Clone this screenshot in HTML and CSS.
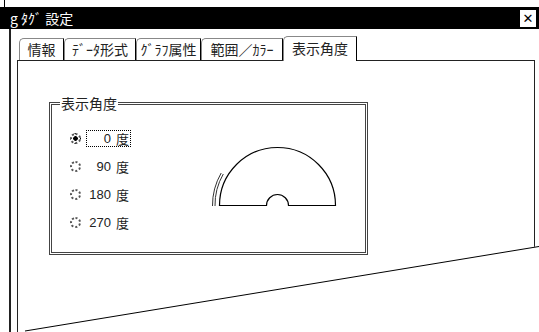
FILE: index.html
```html
<!DOCTYPE html>
<html lang="ja">
  <head>
    <meta charset="UTF-8">
    <title>g タグ 設定</title>
    <link rel="stylesheet" href="styles.css">
  </head>
  <body>
    <div class="top"><span class="tick"></span></div>
    <div class="titlebar">
      <span class="title">g ﾀｸﾞ 設定</span>
      <span class="close">✕</span>
    </div>

    <div class="window">
      <!-- tab strip -->
      <div class="tabs">
        <div class="tab t1">情報</div>
        <div class="tab t2">ﾃﾞｰﾀ形式</div>
        <div class="tab t3">ｸﾞﾗﾌ属性</div>
        <div class="tab t4">範囲／ｶﾗｰ</div>
        <div class="tab t5 active">表示角度</div>
      </div>

      <div class="panel">
        <fieldset class="group">
          <legend>表示角度</legend>
          <div class="group-body">
            <ul class="angles">
              <li class="angle"><span class="radio checked"></span><span class="choice focus"><span class="num">0</span><span class="unit">度</span></span></li>
              <li class="angle"><span class="radio"></span><span class="choice"><span class="num">90</span><span class="unit">度</span></span></li>
              <li class="angle"><span class="radio"></span><span class="choice"><span class="num">180</span><span class="unit">度</span></span></li>
              <li class="angle"><span class="radio"></span><span class="choice"><span class="num">270</span><span class="unit">度</span></span></li>
            </ul>
            <svg class="dial" width="140" height="72" viewBox="0 0 140 72">
              <path d="M14.5,65.5 A58,58 0 0 1 130.5,65.5 L83.5,65.5 A11,11 0 0 0 61.5,65.5 Z" fill="none" stroke="#000" stroke-width="1.2"/>
              <path d="M10,66 A62,62 0 0 1 18.3,34" fill="none" stroke="#333" stroke-width="1"/>
              <path d="M7.5,66 A64.5,64.5 0 0 1 16.2,33" fill="none" stroke="#333" stroke-width="1"/>
            </svg>
          </div>
        </fieldset>
      </div>
    </div>

    <!-- cut edge of the screenshot -->
    <svg class="tear" width="539" height="332" viewBox="0 0 539 332">
      <polygon points="539,246 25,331 25,332 539,332" fill="#fff"/>
      <line x1="539" y1="246.5" x2="25" y2="331" stroke="#000" stroke-width="1"/>
    </svg>
  </body>
</html>
```

FILE: styles.css
```css
* {
  box-sizing: border-box;
}

html,
body {
  margin: 0;
  width: 539px;
  height: 332px;
  overflow: hidden;
  background: #fff;
  font-family: "Noto Sans CJK JP", "Noto Sans", sans-serif;
  color: #222;
}

.top {
  height: 7px;
  padding-left: 4px;
}
.tick {
  display: block;
  width: 1px;
  height: 7px;
  background: #000;
}

.titlebar {
  height: 22px;
  background: #000;
  color: #fff;
  display: flex;
  align-items: center;
  justify-content: space-between;
  padding: 0 3px 0 10px;
  font-size: 14px;
  line-height: 1;
}

.close {
  width: 16px;
  height: 17px;
  background: #fff;
  color: #000;
  font-family: "DejaVu Sans", sans-serif;
  font-weight: bold;
  font-size: 13px;
  display: flex;
  align-items: center;
  justify-content: center;
}

.window {
  margin-left: 9px;
  border-left: 2px solid #222;
  padding-left: 6px;
  height: 303px;
}

.tabs {
  display: flex;
  align-items: flex-end;
  height: 31px;
  padding-left: 2px;
}

.tab {
  height: 22px;
  border: 1px solid #888;
  border-right-color: #000;
  border-bottom: none;
  border-top-left-radius: 5px;
  font-size: 14px;
  line-height: 20px;
  text-align: center;
  white-space: nowrap;
}
.t1 { width: 45px; }
.t2 { width: 72px; }
.t3 { width: 65px; }
.t4 { width: 82px; }
.t5 { width: 74px; }

.tab.active {
  height: 25px;
  line-height: 22px;
  margin-bottom: -1px;
  background: #fff;
  position: relative;
}

.panel {
  width: 518px;
  height: 272px;
  border: 1px solid #222;
  border-bottom: none;
}

.group {
  margin: 35px 0 0 31px;
  width: 319px;
  height: 159px;
  padding: 0;
  border: 3px double #444;
}

.group legend {
  margin-left: 8px;
  padding: 0 1px;
  font-size: 14px;
  line-height: 15px;
}

.group-body {
  display: flex;
  align-items: flex-start;
}

.angles {
  list-style: none;
  margin: 13px 0 0;
  padding: 0 0 0 18px;
  width: 88px;
}

.angle {
  display: flex;
  align-items: center;
  height: 28px;
}

.radio {
  width: 11px;
  height: 11px;
  border-radius: 50%;
  border: 2px dotted #555;
  background: #fff;
  flex: none;
}
.radio.checked {
  background: radial-gradient(circle, #000 2px, #fff 2.6px);
}

.choice {
  margin-left: 5px;
  height: 17px;
  display: flex;
  align-items: center;
  padding: 0 1px 0 2px;
  border: 1px dotted transparent;
  font-size: 13px;
  white-space: nowrap;
}
.choice.focus {
  border-color: #000;
}

.num {
  width: 22px;
  text-align: right;
  font-family: "Liberation Sans", sans-serif;
}
.unit {
  margin-left: 5px;
}

.dial {
  display: block;
  margin: 29px 0 0 65px;
  flex: none;
}

.tear {
  position: absolute;
  left: 0;
  top: 0;
  pointer-events: none;
}
```
